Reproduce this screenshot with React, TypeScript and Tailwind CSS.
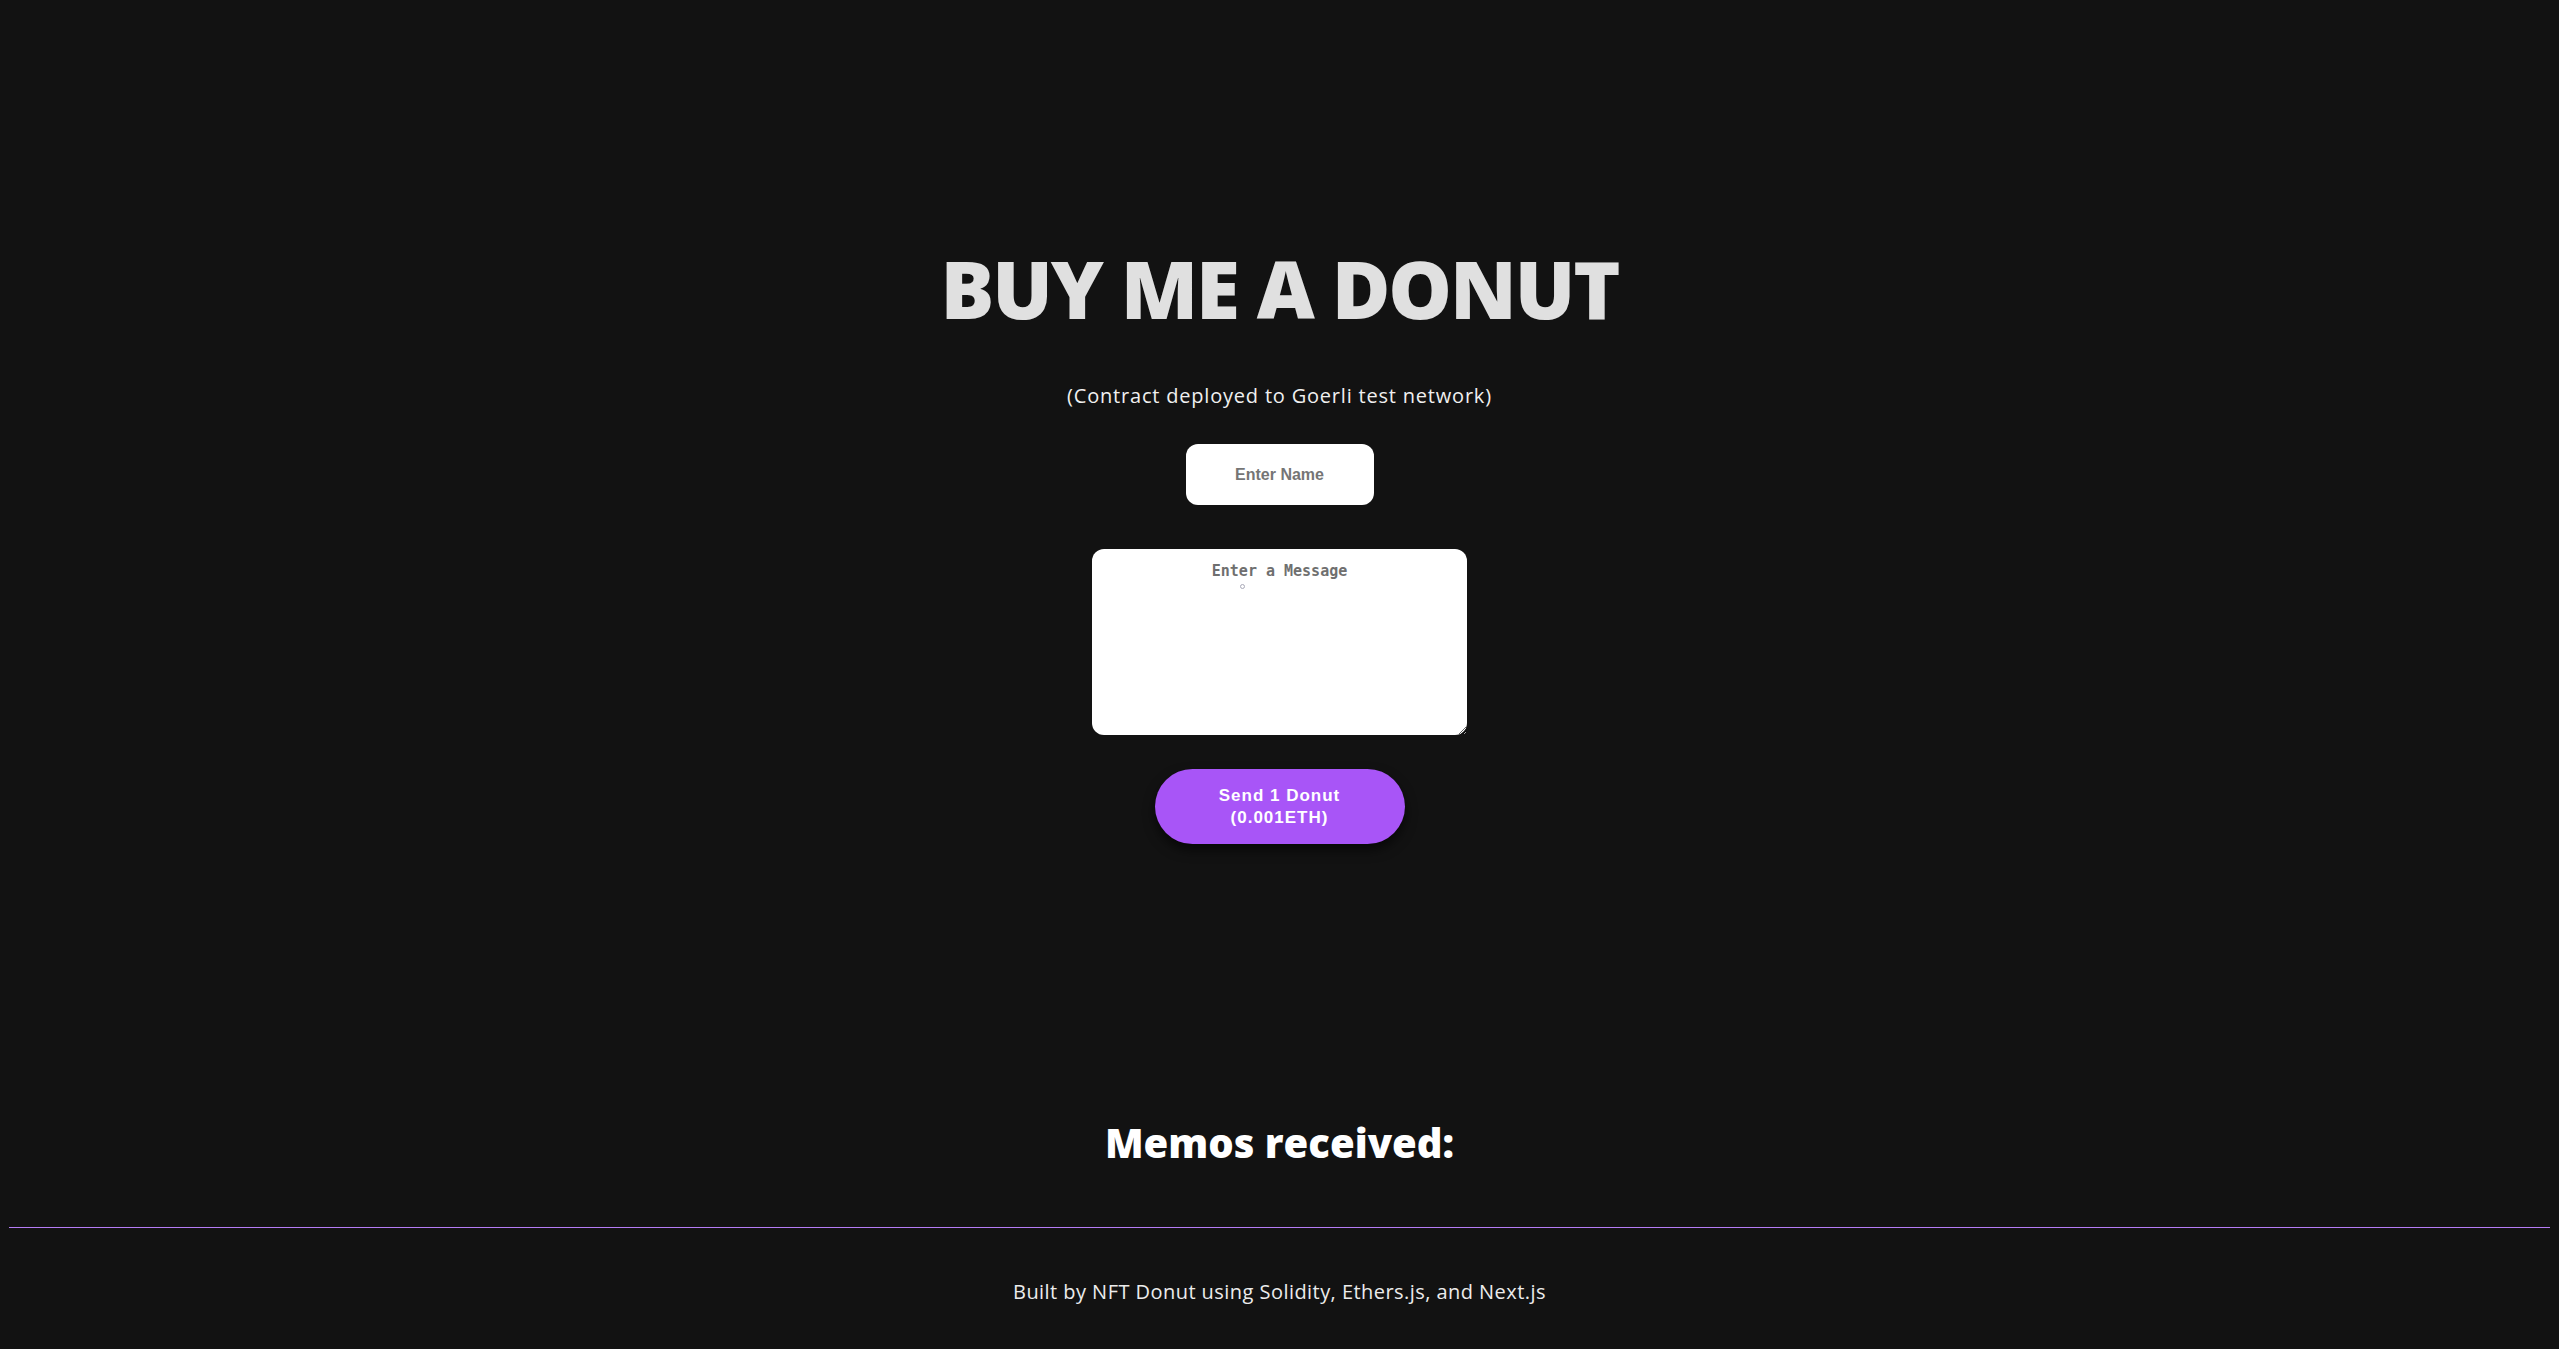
import { useState } from "react";

export default function App() {
  const [name, setName] = useState("");
  const [message, setMessage] = useState("");

  const handleSubmit = (e: React.FormEvent) => {
    e.preventDefault();
  };

  return (
    <div className="min-h-screen bg-[#121212] flex flex-col" style={{ fontFamily: "'Open Sans', 'DejaVu Sans', sans-serif" }}>
      <main className="flex flex-col items-center">
        <h1 className="mt-[248px] text-[80px] leading-none font-extrabold text-[#e0e0e0] tracking-[-2px]">
          BUY ME A DONUT
        </h1>
        <p className="mt-[55px] text-[20px] leading-[26px] tracking-[0.8px] text-[#f0f0f0]">
          (Contract deployed to Goerli test network)
        </p>

        <form onSubmit={handleSubmit} className="flex flex-col items-center">
          <input
            type="text"
            value={name}
            onChange={(e) => setName(e.target.value)}
            placeholder="Enter Name"
            className="mt-[35px] w-[188px] h-[61px] rounded-[12px] bg-white text-center text-[16px] font-bold text-[#333] placeholder-[#757575] outline-none"
            style={{ fontFamily: "'Liberation Sans', Arial, sans-serif" }}
          />
          <div className="relative mt-[44px]">
            <textarea
              value={message}
              onChange={(e) => setMessage(e.target.value)}
              placeholder="Enter a Message"
              className="block w-[375px] h-[186px] rounded-[12px] bg-white text-center pt-[11px] text-[15px] font-semibold text-[#333] placeholder-[#6f6f6f] outline-none"
              style={{ fontFamily: "'DejaVu Sans Mono', 'Liberation Mono', monospace" }}
            />
            <span className="absolute left-[148px] top-[35px] w-[5px] h-[5px] rounded-full border border-[#a9a9b8]" />
          </div>
          <button
            type="submit"
            className="mt-[34px] w-[250px] h-[75px] rounded-full bg-[#a855f7] text-white text-[17px] leading-[22px] font-bold tracking-[1px] shadow-[0_6px_12px_rgba(0,0,0,0.6)] cursor-pointer"
            style={{ fontFamily: "'Liberation Sans', Arial, sans-serif" }}
          >
            Send 1 Donut
            <br />
            (0.001ETH)
          </button>
        </form>

        <h2 className="mt-[275px] text-[40px] leading-[48px] font-extrabold text-white">
          Memos received:
        </h2>
      </main>

      <footer className="mt-[60px] mx-[9px] border-t border-[#b57bf5] flex justify-center">
        <p className="mt-[51px] text-[20px] leading-[26px] tracking-[0.45px] text-[#ececec]">
          Built by NFT Donut using Solidity, Ethers.js, and Next.js
        </p>
      </footer>
    </div>
  );
}
